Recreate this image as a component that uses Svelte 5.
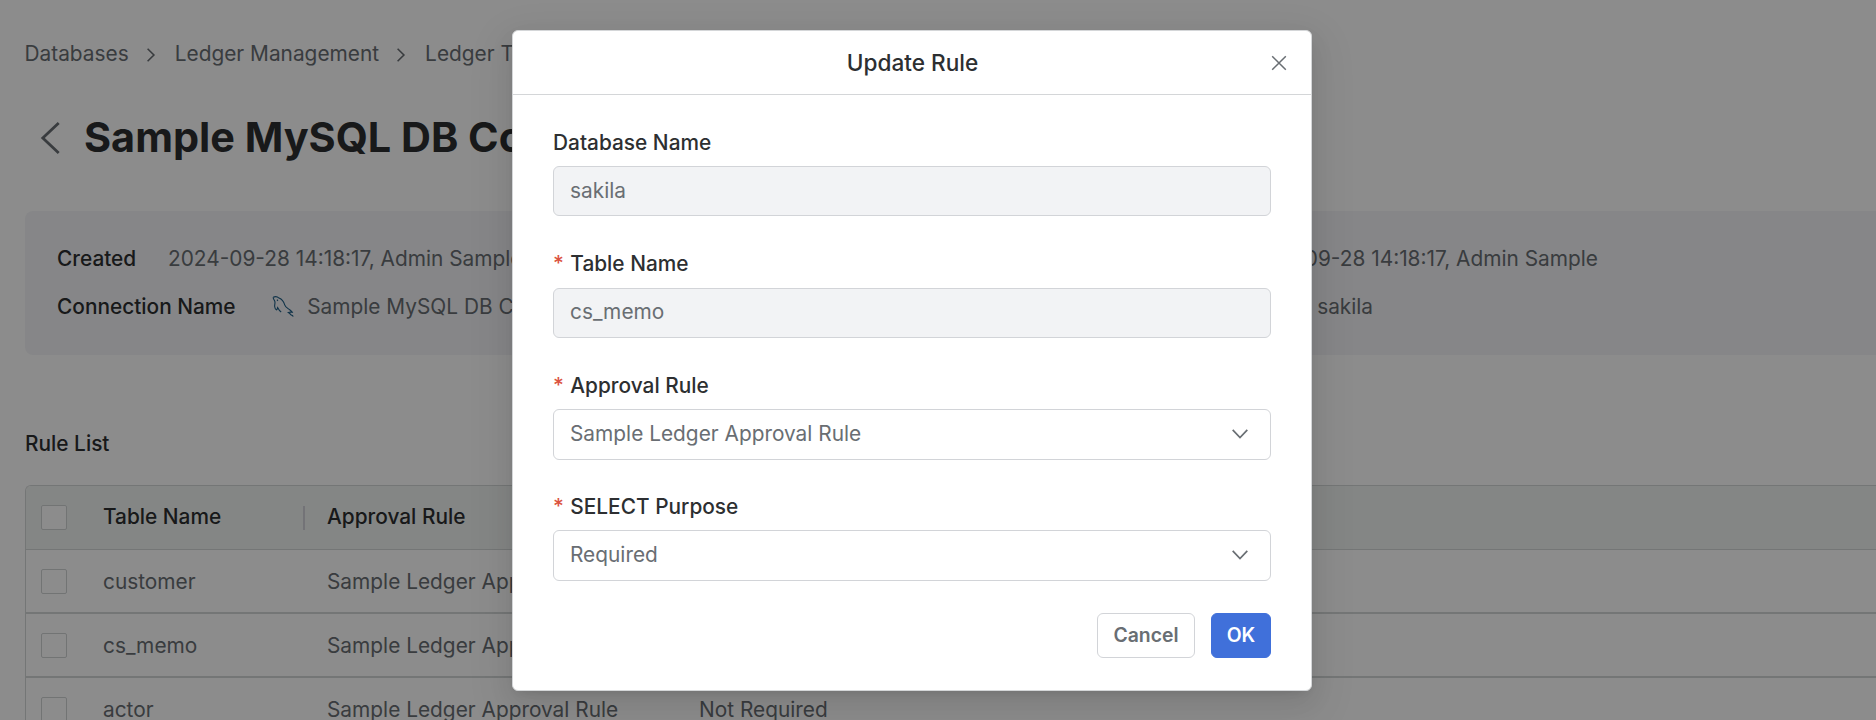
<script>
  const crumbs = ['Databases', 'Ledger Management', 'Ledger Table Policy'];
  const rules = [
    { table: 'customer', rule: 'Sample Ledger Approval Rule', purpose: 'Required' },
    { table: 'cs_memo', rule: 'Sample Ledger Approval Rule', purpose: 'Required' },
    { table: 'actor', rule: 'Sample Ledger Approval Rule', purpose: 'Not Required' }
  ];
  const fields = [
    { label: 'Database Name', value: 'sakila', required: false, kind: 'input' },
    { label: 'Table Name', value: 'cs_memo', required: true, kind: 'input' },
    { label: 'Approval Rule', value: 'Sample Ledger Approval Rule', required: true, kind: 'select' },
    { label: 'SELECT Purpose', value: 'Required', required: true, kind: 'select' }
  ];
</script>

<div class="screen">
  <main class="page">
    <nav class="crumbs">
      {#each crumbs as crumb, i}
        {#if i > 0}
          <svg class="sep" width="10" height="16" viewBox="0 0 10 16"><path d="M1.6 1.8 7.9 8 1.6 14.2" /></svg>
        {/if}
        <span>{crumb}</span>
      {/each}
    </nav>

    <header class="title">
      <svg width="22" height="34" viewBox="0 0 22 34"><path d="M18.7 2 2.8 17 18.7 32" /></svg>
      <h1>Sample MySQL DB Connection</h1>
    </header>

    <section class="info">
      <div class="info-row dates">
        <b>Created</b>
        <span>2024-09-28 14:18:17, Admin Sample</span>
        <span class="updated">2024-09-28 14:18:17, Admin Sample</span>
      </div>
      <div class="info-row">
        <b>Connection Name</b>
        <svg class="dolphin" width="24" height="24" viewBox="0 0 24 24">
          <path d="M2.2 2.2C4.4 1.2 6.5 1.6 8 3.1c3 1.2 4.8 3.6 5.7 6.7.8 2.6 2.8 3.2 5.3 5.2 1.3 1 2 1.6 2.3 2.3-1.5-.3-2.8-.2-4 .3 1.300.7 2 1.400 2.500 2.200 1.200.4 2 .9 2.500 1.700" />
          <path d="M2.200 2.200c-.2 1.700 1.200 2.600 1.700 4.400.4 1.700-.5 3.200-.2 5.200.2 1.600.8 2.900 1.800 3.100.8 0 .8-1.500 1.100-2.300.9 1.800 1.700 3.400 3.600 4.500M6 4.600l.9 1.300" />
        </svg>
        <span class="connection">Sample MySQL DB Connection</span>
        <span>sakila</span>
      </div>
    </section>

    <h2>Rule List</h2>

    <div class="table">
      <div class="row head">
        <i class="check"></i>
        <span class="c1">Table Name</span>
        <span>Approval Rule</span>
        <span>SELECT Purpose</span>
      </div>
      {#each rules as r}
        <div class="row">
          <i class="check"></i>
          <span class="c1">{r.table}</span>
          <span>{r.rule}</span>
          <span>{r.purpose}</span>
        </div>
      {/each}
    </div>
  </main>

  <div class="mask">
    <div class="modal" role="dialog" aria-label="Update Rule">
      <div class="modal-head">
        <span>Update Rule</span>
        <svg class="close" width="18" height="18" viewBox="0 0 18 18"><path d="M2.200 2.200 15.800 15.800M15.800 2.200 2.200 15.800" /></svg>
      </div>
      <div class="form">
        {#each fields as f}
          <div class="field">
            <div class="label">{#if f.required}<em>*</em>{/if}{f.label}</div>
            <div class="control {f.kind}">
              <span>{f.value}</span>
              {#if f.kind === 'select'}
                <svg width="18" height="12" viewBox="0 0 18 12"><path d="M1.700 1.800 9 9.600l7.300-7.800" /></svg>
              {/if}
            </div>
          </div>
        {/each}
        <div class="actions">
          <button>Cancel</button>
          <button class="primary">OK</button>
        </div>
      </div>
    </div>
  </div>
</div>

<style>
  :global(body) { overflow: hidden; }
  .screen {
    position: relative; height: 720px; overflow: hidden; background: #fff;
    font: 400 20.85px/30px Inter, sans-serif; color: #696e73; white-space: nowrap;
  }
  svg { flex: none; fill: none; }
  .page { padding: 39px 0 0 25px; }
  .crumbs { display: flex; align-items: center; height: 30px; margin-left: -.5px; gap: 18px; }
  .sep { margin: 2px 1px 0 -1px; stroke: #696e73; stroke-width: 1.6; }
  .title { display: flex; align-items: center; gap: 22px; height: 60px; margin: 38px 0 0 15px; }
  .title svg { margin-top: 1px; stroke: #696e73; stroke-width: 2.8; }
  h1 { margin: 0; font-size: 41.4px; line-height: 60px; font-weight: 700; color: #2d2f31; }
  .info {
    box-sizing: border-box; height: 144px; margin-top: 44px; padding: 24px 0 0 32px;
    border-radius: 8px 0 0 8px; background: #f4f5f7;
  }
  .info-row { display: flex; align-items: center; height: 48px; }
  b { font-weight: 500; color: #2d2f31; }
  .dates { display: grid; grid-template-columns: 111px 1070px 360px; }
  .updated { text-align: right; }
  .dolphin { margin-left: 35px; stroke: #1d5c85; stroke-width: 1.1; }
  .connection { width: 1010px; margin-left: 12.5px; }
  h2 { margin: 73.5px 0 26.5px; font-size: 20.85px; line-height: 30px; font-weight: 500; color: #2d2f31; }
  .table { border: 1px solid #d4d7d8; border-right: 0; border-radius: 6px 0 0 0; overflow: hidden; }
  .row {
    box-sizing: border-box; display: grid; align-items: center; height: 64px; padding: 1px 0 0 15px;
    grid-template-columns: 62px 224px 372px 1fr; border-bottom: 2px solid #d4d7d8;
  }
  .c1 { position: relative; }
  .head { padding: 0 0 1px 15px; border-bottom-width: 1px; background: #f1f5f2; font-weight: 500; color: #2d2f31; }
  .head .c1::after {
    content: ''; position: absolute; right: 22px; top: 4px; width: 2px; height: 24px; background: #d2d2d9;
  }
  .check { box-sizing: border-box; width: 26px; height: 25px; border: 1px solid #d0d3d4; border-radius: 2px; background: #fff; }
  .mask {
    position: absolute; inset: 0; display: flex; justify-content: center; align-items: flex-start;
    padding-top: 30px; background: rgba(0, 0, 0, .45);
  }
  .modal {
    box-sizing: border-box; width: 800px; height: 661px; margin-left: -52px; border: 1px solid #d4d6d8;
    border-radius: 6px; background: #fff;
    box-shadow: 0 5px 9px -6px rgba(0, 0, 0, .12), 0 9px 24px rgba(0, 0, 0, .08), 0 14px 42px 12px rgba(0, 0, 0, .05);
  }
  .modal-head {
    display: flex; justify-content: center; align-items: center; height: 63px;
    border-bottom: 1px solid #d4d6d8; font-size: 22.6px; font-weight: 500; color: #2d2f31;
  }
  .modal-head span { margin-left: 42px; flex: 1; text-align: center; }
  .close { margin-right: 23px; stroke: #696e73; stroke-width: 1.5; }
  .form { padding: 33px 40px 0; }
  .field { height: 121px; }
  .field:nth-child(2) { height: 122px; }
  .label { height: 30px; margin-bottom: 8px; font-weight: 500; color: #2d2f31; }
  .field:nth-child(2) .label { margin-bottom: 9px; }
  em { display: inline-block; width: 17.3px; font-style: normal; color: #db5341; }
  .control {
    box-sizing: border-box; display: flex; align-items: center; justify-content: space-between;
    height: 50px; padding: 0 21px 2px 16px; border: 1px solid #d2d4d8; border-radius: 6px;
  }
  .field:first-child .control { padding-bottom: 0; }
  .input { background: #f2f3f5; }
  .select { height: 51px; }
  .control svg { stroke: #696e73; stroke-width: 1.7; margin-top: 1px; }
  .actions { display: flex; justify-content: flex-end; gap: 16px; }
  button {
    box-sizing: border-box; width: 98px; height: 45px; padding: 0; border: 1px solid #d2d4d8;
    border-radius: 6px; background: #fff; font: 600 19.4px/43px Inter, sans-serif; color: #696e73;
  }
  .primary { width: 60px; border-color: #4070da; background: #4070da; color: #fff; }
</style>
